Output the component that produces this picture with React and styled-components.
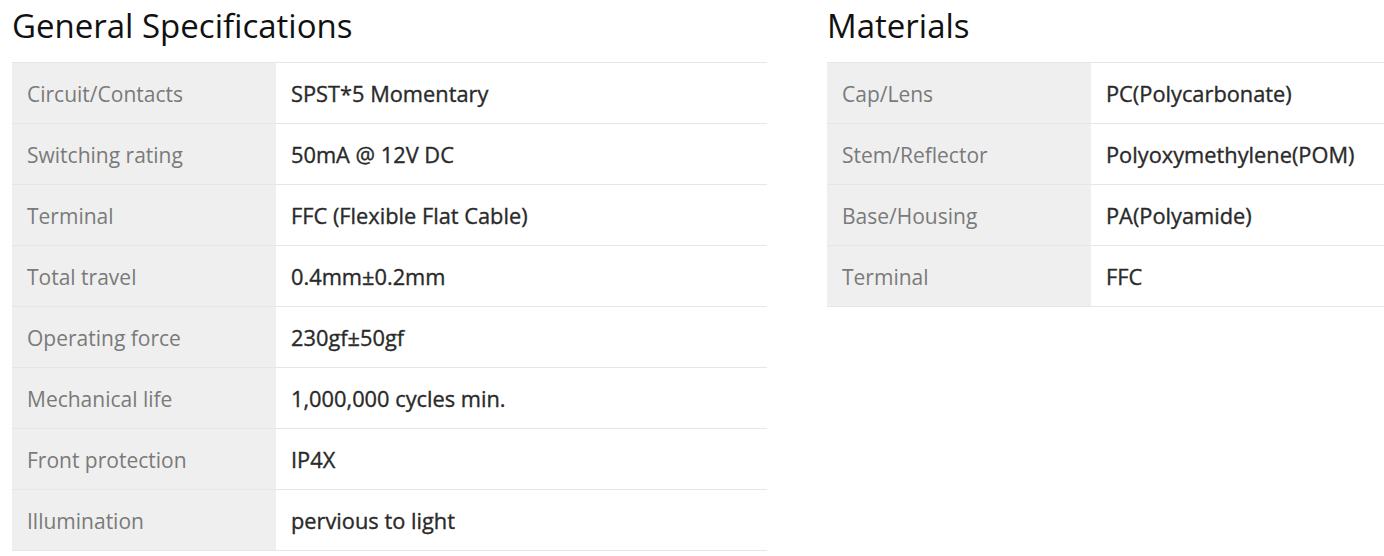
import React from "react";
import styled, { createGlobalStyle } from "styled-components";

const Global = createGlobalStyle`
  html, body { margin: 0; padding: 0; background: #fff; overflow: hidden; }
  body { font-family: "Open Sans", "Noto Sans", sans-serif; }
`;

const Page = styled.div`
  display: grid;
  grid-template-columns: 755px 1fr;
  column-gap: 60px;
  padding: 0 0 0 12px;
`;

const Section = styled.section`
  display: flex;
  flex-direction: column;
  min-width: 0;
`;

const Title = styled.h2`
  margin: 0;
  height: 62px;
  box-sizing: border-box;
  padding-top: 2px;
  font-size: 33px;
  line-height: 48px;
  font-weight: 400;
  color: #111;
`;

const Table = styled.div`
  display: flex;
  flex-direction: column;
  border-top: 1px solid #e6e6e6;
`;

const Row = styled.div`
  display: grid;
  grid-template-columns: 264px 1fr;
  height: 61px;
  box-sizing: border-box;
  border-bottom: 1px solid #e6e6e6;
`;

const Cell = styled.div`
  display: flex;
  align-items: center;
  padding: 2px 0 0 15px;
  white-space: nowrap;
`;

const Label = styled(Cell)`
  background: #efefef;
  color: #7a7a7a;
  font-size: 21px;
`;

const Value = styled(Cell)`
  padding-top: 1px;
  color: #2a2a2a;
  font-size: 21.8px;
  font-weight: 400;
  -webkit-text-stroke: 0.35px #2a2a2a;
`;

const general = [
  ["Circuit/Contacts", "SPST*5 Momentary"],
  ["Switching rating", "50mA @ 12V DC"],
  ["Terminal", "FFC (Flexible Flat Cable)"],
  ["Total travel", "0.4mm±0.2mm"],
  ["Operating force", "230gf±50gf"],
  ["Mechanical life", "1,000,000 cycles min."],
  ["Front protection", "IP4X"],
  ["Illumination", "pervious to light"],
];

const materials = [
  ["Cap/Lens", "PC(Polycarbonate)"],
  ["Stem/Reflector", "Polyoxymethylene(POM)"],
  ["Base/Housing", "PA(Polyamide)"],
  ["Terminal", "FFC"],
];

function SpecTable({ title, rows }) {
  return (
    <Section>
      <Title>{title}</Title>
      <Table>
        {rows.map(([k, v]) => (
          <Row key={k}>
            <Label>{k}</Label>
            <Value>{v}</Value>
          </Row>
        ))}
      </Table>
    </Section>
  );
}

export default function App() {
  return (
    <>
      <Global />
      <Page>
        <SpecTable title="General Specifications" rows={general} />
        <SpecTable title="Materials" rows={materials} />
      </Page>
    </>
  );
}
